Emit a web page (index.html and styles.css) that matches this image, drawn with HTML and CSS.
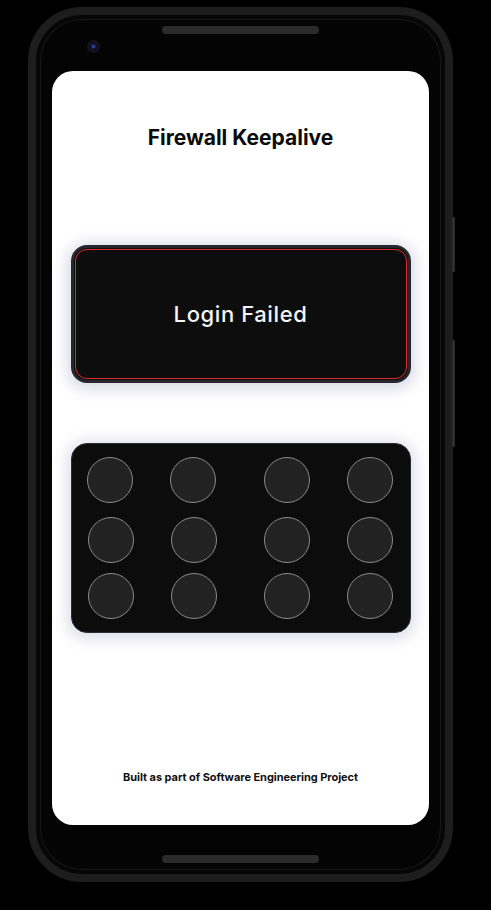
FILE: index.html
```html
<!DOCTYPE html>
<html lang="en">
<head>
<meta charset="utf-8">
<title>Firewall Keepalive</title>
<link rel="stylesheet" href="styles.css">
</head>
<body>
<div class="stage">
  <div class="phone">
    <div class="side-buttons">
      <span class="btn btn-power"></span>
      <span class="btn btn-volume"></span>
    </div>
    <div class="top-bezel">
      <span class="camera"></span>
      <span class="speaker"></span>
    </div>
    <main class="screen">
      <h1 class="title">Firewall Keepalive</h1>
      <section class="status-card">
        <div class="status-inner">
          <span class="status-text">Login Failed</span>
        </div>
      </section>
      <section class="pad-card">
        <div class="pad-row">
          <div class="pad-group"><span class="dot"></span><span class="dot"></span></div>
          <div class="pad-group"><span class="dot"></span><span class="dot"></span></div>
        </div>
        <div class="pad-row">
          <div class="pad-group"><span class="dot"></span><span class="dot"></span></div>
          <div class="pad-group"><span class="dot"></span><span class="dot"></span></div>
        </div>
        <div class="pad-row">
          <div class="pad-group"><span class="dot"></span><span class="dot"></span></div>
          <div class="pad-group"><span class="dot"></span><span class="dot"></span></div>
        </div>
      </section>
      <footer class="footer">Built as part of Software Engineering Project</footer>
    </main>
    <div class="bottom-bezel">
      <span class="speaker"></span>
    </div>
  </div>
</div>
</body>
</html>
```
FILE: styles.css
```css
* { box-sizing: border-box; }
html, body {
  margin: 0;
  padding: 0;
  background: #000;
  width: 491px;
  height: 910px;
  overflow: hidden;
}
.stage {
  padding: 7px 0 0 28px;
}
.phone {
  position: relative;
  width: 425px;
  height: 875px;
  border-radius: 54px;
  background: #040404;
  border: 8px solid #1d1d1d;
  box-shadow: inset 0 0 0 4px #060606, inset 0 0 0 5px #181818;
  display: flex;
  flex-direction: column;
  align-items: center;
}
.side-buttons {
  position: absolute;
  right: -10px;
  top: 0;
  width: 3px;
  height: 100%;
}
.btn {
  position: absolute;
  right: 0;
  width: 3px;
  background: #2d2d2d;
  border-radius: 1px;
}
.btn-power { top: 202px; height: 55px; }
.btn-volume { top: 325px; height: 107px; }
.top-bezel {
  position: relative;
  width: 100%;
  height: 56px;
  display: flex;
  justify-content: center;
  padding-top: 11px;
}
.speaker {
  display: block;
  width: 157px;
  height: 8px;
  border-radius: 4px;
  background: #2b2b2b;
}
.camera {
  position: absolute;
  left: 51px;
  top: 25px;
  width: 13px;
  height: 13px;
  border-radius: 50%;
  background: radial-gradient(circle, #2a3a8a 0 1.5px, #0e1020 2.5px, #14141c 6.5px);
}
.screen {
  width: 377px;
  height: 754px;
  background: #fff;
  border-radius: 21px;
  display: flex;
  flex-direction: column;
  align-items: center;
  padding-top: 53px;
}
.title {
  margin: 0;
  font-family: "Inter", "Liberation Sans", sans-serif;
  font-weight: 700;
  font-size: 21px;
  line-height: 28px;
  letter-spacing: 0;
  color: #0b0b0b;
}
.status-card {
  margin-top: 93px;
  width: 340px;
  height: 138px;
  border-radius: 16px;
  background: #0d0d0d;
  border: 3px solid #26262e;
  padding: 1px;
  box-shadow: 0 2px 14px 4px rgba(120, 120, 170, 0.28);
}
.status-inner {
  width: 100%;
  height: 100%;
  border: 1.5px solid #e02b2b;
  border-radius: 12px;
  display: flex;
  align-items: center;
  justify-content: center;
}
.status-text {
  font-family: "Inter", "Liberation Sans", sans-serif;
  font-size: 22px;
  font-weight: 500;
  letter-spacing: 0.6px;
  color: #f4f4f4;
}
.pad-card {
  margin-top: 60px;
  width: 340px;
  height: 190px;
  border-radius: 16px;
  background: #0c0c0c;
  border: 1px solid #2c2c3a;
  box-shadow: 0 2px 14px 4px rgba(120, 120, 170, 0.25);
  display: flex;
  flex-direction: column;
  padding: 13px 17px 0 15px;
}
.pad-row {
  display: flex;
  justify-content: space-between;
}
.pad-row + .pad-row { margin-top: 14px; padding-left: 1px; }
.pad-row:nth-child(3) { margin-top: 10px; }
.pad-group {
  display: flex;
  gap: 37px;
}
.dot {
  display: block;
  width: 46px;
  height: 46px;
  border-radius: 50%;
  background: #222;
  border: 1px solid #8a8a8a;
}
.footer {
  margin-top: auto;
  margin-bottom: 41px;
  font-family: "Inter", "Liberation Sans", sans-serif;
  font-weight: 700;
  font-size: 11px;
  letter-spacing: -0.05px;
  color: #111;
}
.bottom-bezel {
  width: 100%;
  display: flex;
  justify-content: center;
  padding-top: 30px;
}
```
